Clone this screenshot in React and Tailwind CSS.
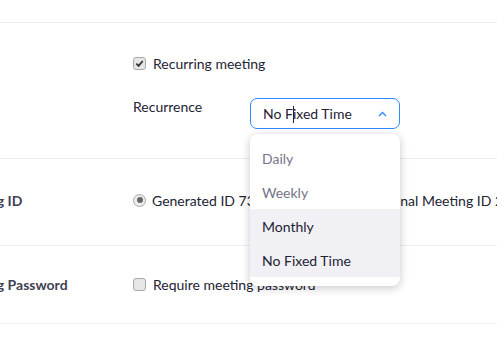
import React from "react";

function CheckBox({ checked }) {
  return (
    <span className="w-[13px] h-[13px] rounded-[3px] border border-[#a9a9a9] bg-[#e6e6e6] flex items-center justify-center shrink-0">
      {checked && (
        <svg width="9" height="9" viewBox="0 0 10 10">
          <path d="M1.5 5.2 L4 7.6 L8.6 2.2" fill="none" stroke="#333" strokeWidth="2" />
        </svg>
      )}
    </span>
  );
}

function Radio() {
  return (
    <span className="w-[13px] h-[13px] rounded-full border border-[#a9a9a9] bg-[#ececec] flex items-center justify-center shrink-0">
      <span className="w-[6px] h-[6px] rounded-full bg-[#666]" />
    </span>
  );
}

const options = [
  { label: "Daily", active: false },
  { label: "Weekly", active: false },
  { label: "Monthly", active: true },
  { label: "No Fixed Time", active: true },
];

export default function App() {
  return (
    <div className="relative w-[497px] h-[359px] overflow-hidden bg-white font-['Lato','Open_Sans',sans-serif] text-[14px] text-[#232333]">
      <div className="h-[23px] border-b border-[#ededf4]" />

      {/* recurring */}
      <div className="flex h-[136px] border-b border-[#ededf4]">
        <div className="w-[181px] ml-[-48px] shrink-0" />
        <div className="flex flex-col pt-[30px]">
          <div className="flex items-center gap-[7px] h-[20px]">
            <CheckBox checked />
            <span>Recurring meeting</span>
          </div>
          <div className="flex mt-[25px]">
            <span className="w-[117px] leading-[18px]">Recurrence</span>
            <div className="relative w-[150px] h-[31px] rounded-[7px] border border-[#2d8cff] flex items-center justify-between pl-[12px] pr-[12px]">
              <span className="leading-none">No Fixed Time</span>
              <svg width="9" height="6" viewBox="0 0 9 6">
                <path d="M1 5 L4.5 1.5 L8 5" fill="none" stroke="#2d8cff" strokeWidth="1.4" />
              </svg>
              <span className="absolute left-[42px] top-[7px] w-[1px] h-[17px] bg-[#232333]" />
            </div>
          </div>
        </div>
      </div>

      {/* meeting id */}
      <div className="flex items-center h-[87px] border-b border-[#ededf4] pb-[4px]">
        <div className="w-[181px] ml-[-48px] shrink-0 font-bold text-[#414152] whitespace-nowrap">Meeting ID</div>
        <div className="flex items-center whitespace-nowrap">
          <Radio />
          <span className="ml-[6px]">Generated ID 731 384 592</span>
          <span className="ml-[28px] flex items-center gap-[6px]">
            <Radio />
            <span>Personal Meeting ID 249 555 0217</span>
          </span>
        </div>
      </div>

      {/* password */}
      <div className="flex items-center h-[78px] border-b border-[#ededf4] pb-[1px]">
        <div className="w-[181px] ml-[-48px] shrink-0 font-bold text-[#414152] whitespace-nowrap">Meeting Password</div>
        <div className="flex items-center gap-[7px] whitespace-nowrap">
          <CheckBox />
          <span>Require meeting password</span>
        </div>
      </div>

      {/* dropdown menu */}
      <div className="absolute left-[250px] top-[134px] w-[150px] h-[152px] rounded-[8px] bg-white shadow-[0_2px_10px_rgba(0,0,0,0.22)] pt-[7px] overflow-hidden">
        {options.map((o) => (
          <div
            key={o.label}
            className={`h-[34px] flex items-center pl-[12px] ${o.active ? "bg-[#f1f1f5] text-[#232333]" : "text-[#747487]"}`}
          >
            {o.label}
          </div>
        ))}
      </div>
    </div>
  );
}
